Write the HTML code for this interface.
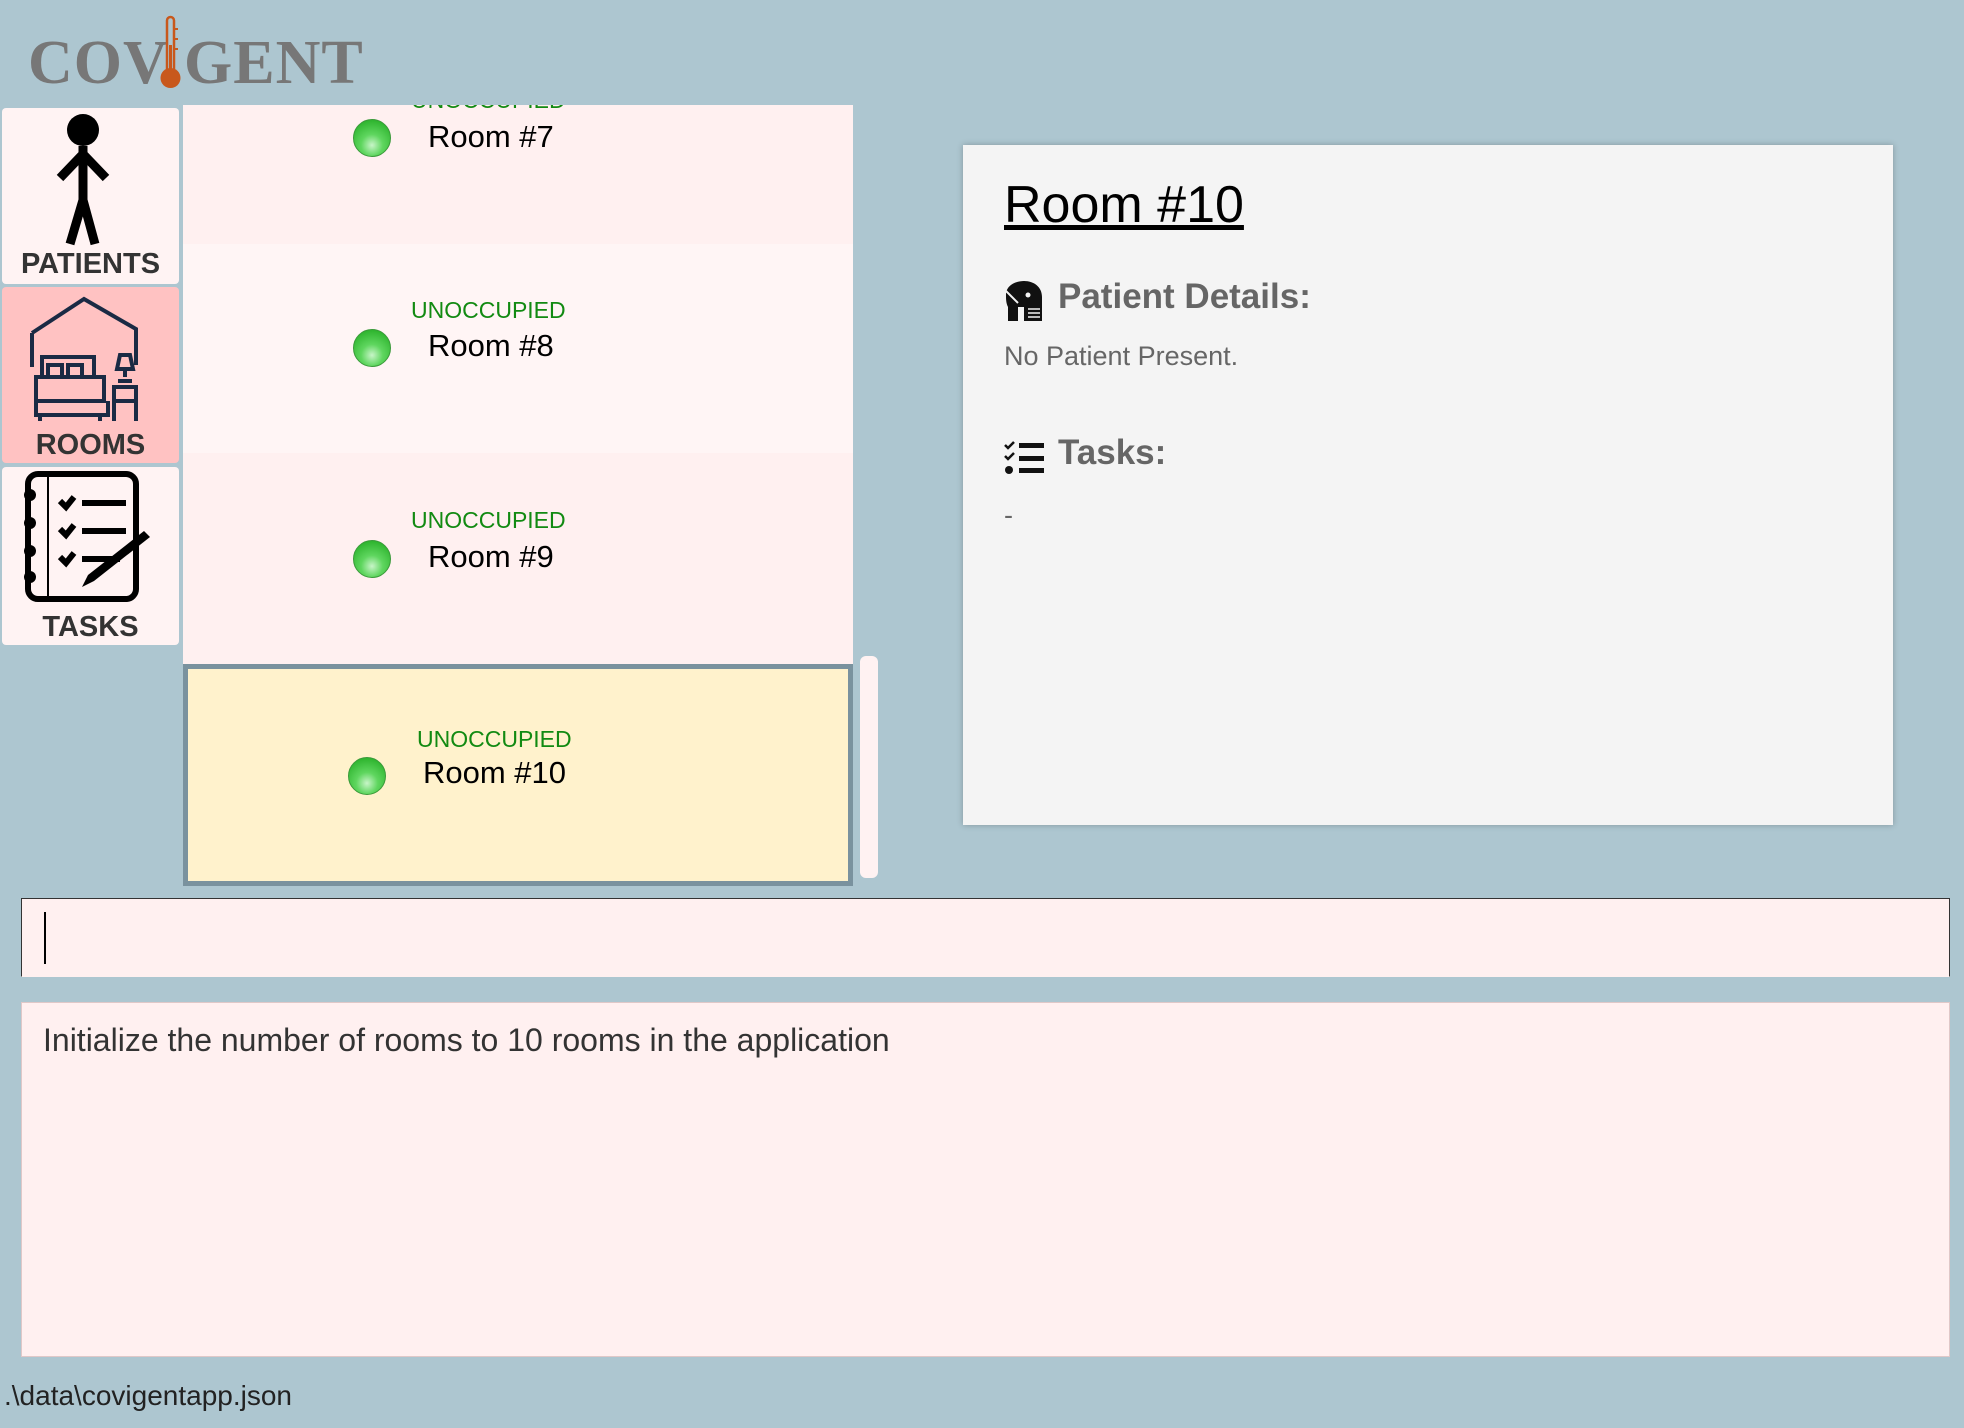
<!DOCTYPE html>
<html><head><meta charset="utf-8"><style>
*{margin:0;padding:0;box-sizing:border-box}
body{width:1964px;height:1428px;background:#adc6d0;font-family:"Liberation Sans",sans-serif;position:relative;overflow:hidden}
.abs{position:absolute}
.logo{top:28px;font-family:"Liberation Serif",serif;font-weight:bold;font-size:62px;color:#777;letter-spacing:1px}
.nav{left:2px;width:177px;background:#fff3f3;border-radius:4px;text-align:center}
.nav span{position:absolute;left:0;right:0;font-weight:bold;font-size:29px;color:#333}
.list{left:183px;top:105px;width:670px;height:781px;background:#fff2f2;overflow:hidden}
.row{position:absolute;left:0;width:670px}
.un{position:absolute;color:#128a12;font-size:23px}
.rm{position:absolute;color:#000;font-size:31px}
.dot{position:absolute;width:38px;height:38px;border-radius:50%;background:radial-gradient(circle at 50% 70%,#c8f5c8 0,#5fd65f 35%,#2fb52f 80%);border:1px solid #3a9a3a}
.detail{left:963px;top:145px;width:930px;height:680px;background:#f4f4f4;box-shadow:0 0 6px rgba(0,0,0,.25)}
.box{left:21px;width:1929px;background:#fff0f0}
</style></head><body>
<div class="abs logo" style="left:28px">COV</div>
<div class="abs logo" style="left:184px">GENT</div>
<svg class="abs" style="left:156px;top:15px" width="30" height="76" viewBox="0 0 30 76"><rect x="11" y="2" width="7" height="56" rx="3.5" fill="none" stroke="#c8581c" stroke-width="2.5"/><circle cx="14.5" cy="63" r="10" fill="#c8581c"/><rect x="13" y="30" width="3" height="30" fill="#c8581c"/><path d="M18 14h4M18 24h4M18 34h4" stroke="#c8581c" stroke-width="2"/></svg>

<div class="abs nav" style="top:108px;height:176px">
<svg class="abs" style="left:48px;top:2px" width="70" height="136" viewBox="0 0 70 136"><circle cx="33" cy="20" r="16"/><path d="M33 36V90M33 44L10 68M33 44L56 68M33 90L20 134M33 90L45 134" stroke="#000" stroke-width="9" fill="none"/></svg>
<span style="top:140px">PATIENTS</span></div>
<div class="abs nav" style="top:287px;height:176px;background:#ffc2c2">
<svg class="abs" style="left:26px;top:4px" width="116" height="134" viewBox="0 0 116 134" fill="none" stroke="#1a2a44" stroke-width="4"><path d="M4 42L56 8 108 38V74M4 42V76"/><path d="M8 86h68v24H8zM8 110v14h72v-14M12 124v6M72 124v6M14 86V66h52v20M20 86V74h14v12M40 86V74h14v12"/><path d="M84 96h24v34M86 96v34M86 110h22M92 64h10l3 14H89zM97 78v8M90 90h14"/></svg>
<span style="top:142px">ROOMS</span></div>
<div class="abs nav" style="top:467px;height:178px">
<svg class="abs" style="left:18px;top:4px" width="136" height="132" viewBox="0 0 136 132"><rect x="8" y="3" width="108" height="125" rx="10" fill="none" stroke="#000" stroke-width="6"/><path d="M28 3v125" stroke="#000" stroke-width="2"/><g fill="#000"><circle cx="10" cy="24" r="6"/><circle cx="10" cy="52" r="6"/><circle cx="10" cy="80" r="6"/><circle cx="10" cy="106" r="6"/></g><path d="M40 30l6 6 8-10M40 58l6 6 8-10M40 86l6 6 8-10M62 32h44M62 60h44M62 88h38" stroke="#000" stroke-width="6" fill="none"/><path d="M130 66l-56 44-12 6 6-12 56-44z" fill="#000"/></svg>
<span style="top:144px">TASKS</span></div>

<div class="abs list">
<div class="row" style="top:0;height:139px;background:#fff0f0">
<div class="un" style="left:228px;top:-18px">UNOCCUPIED</div>
<div class="dot" style="left:170px;top:14px"></div>
<div class="rm" style="left:245px;top:14px">Room #7</div></div>
<div class="row" style="top:139px;height:209px;background:#fff5f5">
<div class="un" style="left:228px;top:53px">UNOCCUPIED</div>
<div class="dot" style="left:170px;top:85px"></div>
<div class="rm" style="left:245px;top:84px">Room #8</div></div>
<div class="row" style="top:348px;height:211px;background:#fff0f0">
<div class="un" style="left:228px;top:54px">UNOCCUPIED</div>
<div class="dot" style="left:170px;top:87px"></div>
<div class="rm" style="left:245px;top:86px">Room #9</div></div>
<div class="row" style="top:559px;height:222px;background:#fff2cc;border:5px solid #7a929e">
<div class="un" style="left:229px;top:57px">UNOCCUPIED</div>
<div class="dot" style="left:160px;top:88px"></div>
<div class="rm" style="left:235px;top:86px">Room #10</div></div>
</div>
<div class="abs" style="left:860px;top:656px;width:18px;height:222px;background:#fff2f2;border-radius:6px"></div>

<div class="abs detail">
<div class="abs" style="left:41px;top:30px;font-size:52px;text-decoration:underline;color:#000">Room #10</div>
<svg class="abs" style="left:41px;top:136px" width="40" height="40" viewBox="0 0 40 40"><path d="M2 14C2 4 12 0 20 0c10 0 18 6 18 16v10H14v14H4V26C2 22 2 18 2 14z" fill="#111"/><path d="M2 10l12 12" stroke="#f4f4f4" stroke-width="2"/><circle cx="24" cy="14" r="2.5" fill="#f4f4f4"/><rect x="20" y="24" width="18" height="16" fill="#111"/><path d="M24 28h12M24 32h12M24 36h12" stroke="#f4f4f4" stroke-width="1.5"/></svg>
<div class="abs" style="left:95px;top:132px;font-size:35px;font-weight:bold;color:#666">Patient Details:</div>
<div class="abs" style="left:41px;top:196px;font-size:27px;color:#666">No Patient Present.</div>
<svg class="abs" style="left:41px;top:296px" width="40" height="34" viewBox="0 0 40 34"><path d="M1 4l3 3 6-6M1 15l3 3 6-6" stroke="#111" stroke-width="2.5" fill="none"/><circle cx="5" cy="29" r="4" fill="#111"/><rect x="15" y="2" width="25" height="5" fill="#111"/><rect x="15" y="15" width="25" height="5" fill="#111"/><rect x="15" y="27" width="25" height="5" fill="#111"/></svg>
<div class="abs" style="left:95px;top:288px;font-size:35px;font-weight:bold;color:#666">Tasks:</div>
<div class="abs" style="left:41px;top:355px;font-size:27px;color:#666">-</div>
</div>

<div class="abs box" style="top:898px;height:79px;border:1px solid #333;border-bottom-color:#fff0f0"></div>
<div class="abs" style="left:44px;top:912px;width:2px;height:52px;background:#000"></div>
<div class="abs box" style="top:1002px;height:355px;border:1px solid #e0c8c8"></div>
<div class="abs" style="left:43px;top:1022px;font-size:32px;color:#333;font-weight:300">Initialize the number of rooms to 10 rooms in the application</div>
<div class="abs" style="left:4px;top:1380px;font-size:28px;color:#222">.\data\covigentapp.json</div>
</body></html>
